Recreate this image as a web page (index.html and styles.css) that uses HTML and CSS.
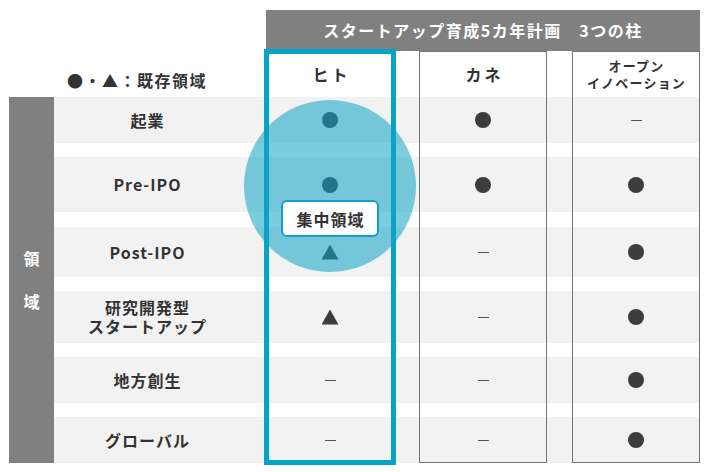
FILE: index.html
```html
<!DOCTYPE html>
<html lang="ja">
<head>
<meta charset="utf-8">
<link rel="stylesheet" href="styles.css">
</head>
<body>
<div class="page">
  <div class="grid">
    <div class="title">スタートアップ育成5カ年計画　3つの柱</div>
    <div class="legend">●・▲：既存領域</div>

    <div class="rowbg r1"></div>
    <div class="rowbg r2"></div>
    <div class="rowbg r3"></div>
    <div class="rowbg r4"></div>
    <div class="rowbg r5"></div>
    <div class="rowbg r6"></div>

    <div class="sidebar"><span>領</span><span>域</span></div>

    <div class="label r1">起業</div>
    <div class="label r2">Pre-IPO</div>
    <div class="label r3">Post-IPO</div>
    <div class="label r4"><span class="ln">研究開発型</span><span class="ln">スタートアップ</span></div>
    <div class="label r5">地方創生</div>
    <div class="label r6">グローバル</div>

    <div class="cell c-hito r1"><span class="dot"></span></div>
    <div class="cell c-hito r2"><span class="dot"></span></div>
    <div class="cell c-hito r3"><span class="tri"></span></div>
    <div class="cell c-hito r4"><span class="tri"></span></div>
    <div class="cell c-hito r5"><span class="dash"></span></div>
    <div class="cell c-hito r6"><span class="dash"></span></div>

    <div class="cell c-kane r1"><span class="dot"></span></div>
    <div class="cell c-kane r2"><span class="dot"></span></div>
    <div class="cell c-kane r3"><span class="dash"></span></div>
    <div class="cell c-kane r4"><span class="dash"></span></div>
    <div class="cell c-kane r5"><span class="dash"></span></div>
    <div class="cell c-kane r6"><span class="dash"></span></div>

    <div class="cell c-open r1"><span class="dash"></span></div>
    <div class="cell c-open r2"><span class="dot"></span></div>
    <div class="cell c-open r3"><span class="dot"></span></div>
    <div class="cell c-open r4"><span class="dot"></span></div>
    <div class="cell c-open r5"><span class="dot"></span></div>
    <div class="cell c-open r6"><span class="dot"></span></div>

    <div class="focus-circle"></div>

    <div class="colbox box-kane"><div class="colhead">カネ</div></div>
    <div class="colbox box-open"><div class="colhead small"><span class="ln">オープン</span><span class="ln">イノベーション</span></div></div>
    <div class="colbox box-hito"><div class="colhead hito">ヒト</div></div>

    <div class="focus-label">集中領域</div>
  </div>
</div>
</body>
</html>
```

FILE: styles.css
```css
* { box-sizing: border-box; }
html, body { margin: 0; padding: 0; background: #ffffff; }
body {
  font-family: "Noto Sans CJK JP", "Noto Sans", sans-serif;
  color: #333333;
  font-weight: 700;
}
.page {
  padding: 10px 0 0 9px;
  width: 708px;
  height: 472px;
  overflow: hidden;
}
.grid {
  position: relative;
  display: grid;
  grid-template-columns: 45px 187px 25px 128px 25px 128px 25px 128px;
  grid-template-rows: 41px 46px 46px 14px 55px 15px 50px 14px 52px 14px 46px 14px 46px;
}
.title {
  grid-column: 4 / 9;
  grid-row: 1;
  background: #808080;
  color: #ffffff;
  font-size: 16px;
  letter-spacing: 1.5px;
  display: flex;
  align-items: center;
  justify-content: center;
  padding-bottom: 2px;
}
.legend {
  grid-column: 1 / 4;
  grid-row: 2;
  font-size: 16px;
  letter-spacing: 1.5px;
  align-self: end;
  padding: 0 0 5px 58px;
  line-height: 24px;
}
.rowbg {
  grid-column: 2 / 9;
  background: #f2f2f2;
}
.r1 { grid-row: 3; }
.r2 { grid-row: 5; }
.r3 { grid-row: 7; }
.r4 { grid-row: 9; }
.r5 { grid-row: 11; }
.r6 { grid-row: 13; }

.sidebar {
  grid-column: 1;
  grid-row: 3 / 14;
  background: #808080;
  color: #ffffff;
  font-size: 16px;
  display: flex;
  flex-direction: column;
  align-items: center;
  justify-content: center;
  gap: 20px;
  line-height: 23px;
}
.label {
  grid-column: 2;
  display: flex;
  flex-direction: column;
  align-items: center;
  justify-content: center;
  text-align: center;
  font-size: 16px;
  letter-spacing: 1px;
  line-height: 19px;
}
.ln { display: block; }
.cell {
  display: flex;
  align-items: center;
  justify-content: center;
}
.c-hito { grid-column: 4; }
.c-kane { grid-column: 6; }
.c-open { grid-column: 8; }

.dot {
  width: 16px;
  height: 16px;
  border-radius: 50%;
  background: #3d3d40;
}
.tri {
  width: 17px;
  height: 15px;
  background: #3d3d40;
  clip-path: polygon(50% 0, 100% 100%, 0 100%);
}
.dash {
  width: 11px;
  height: 1px;
  background: #555555;
}

.focus-circle {
  position: absolute;
  left: 235px;
  top: 90px;
  width: 172px;
  height: 172px;
  border-radius: 50%;
  background: rgba(16, 162, 198, 0.55);
}

.colbox {
  grid-row: 2 / 14;
  border: 1px solid #747474;
  display: flex;
  flex-direction: column;
}
.box-kane { grid-column: 6; }
.box-open { grid-column: 8; }
.box-hito {
  grid-column: 4;
  margin: -2px;
  border: 5px solid #05a3c8;
}
.colhead {
  height: 45px;
  display: flex;
  flex-direction: column;
  align-items: center;
  justify-content: center;
  text-align: center;
  font-size: 16px;
  letter-spacing: 3px;
  padding-left: 3px;
  padding-bottom: 2px;
}
.colhead.hito {
  height: 42px;
}
.colhead.small {
  font-size: 13px;
  line-height: 17px;
  letter-spacing: 1.2px;
  padding-left: 1px;
}

.focus-label {
  position: absolute;
  left: 272px;
  top: 190px;
  width: 98px;
  height: 37px;
  background: #ffffff;
  border: 2px solid #12a0c6;
  border-radius: 6px;
  display: flex;
  align-items: center;
  justify-content: center;
  font-size: 16px;
  letter-spacing: 1px;
  padding-left: 1px;
}
```
